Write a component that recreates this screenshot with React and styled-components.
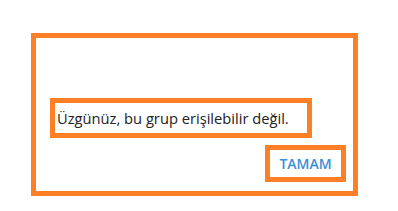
import React from "react";
import styled, { createGlobalStyle } from "styled-components";

const Global = createGlobalStyle`
  html, body { margin: 0; padding: 0; background: #ffffff; }
  body { font-family: "Open Sans", "Liberation Sans", sans-serif; }
`;

const Page = styled.div`
  width: 398px;
  height: 211px;
  padding: 33px 0 0 31px;
  box-sizing: border-box;
`;

const Dialog = styled.div`
  width: 327px;
  height: 163px;
  box-sizing: border-box;
  border: 5px solid #ff7f27;
  background: #fff;
  display: flex;
  flex-direction: column;
  justify-content: flex-end;
  gap: 7px;
  padding: 0 7px 9px 14px;
`;

const Message = styled.div`
  width: 262px;
  height: 40px;
  box-sizing: border-box;
  border: 5px solid #ff7f27;
  display: flex;
  align-items: center;
  padding-left: 2px;
  font-size: 14.7px;
  color: #222222;
  white-space: nowrap;
`;

const Button = styled.button`
  align-self: flex-end;
  width: 81px;
  height: 37px;
  box-sizing: border-box;
  border: 5px solid #ff7f27;
  background: #fff;
  padding: 0;
  font-family: "Open Sans", "Liberation Sans", sans-serif;
  font-size: 14px;
  font-weight: 600;
  color: #3a8fd6;
  cursor: pointer;
`;

export default function App() {
  return (
    <>
      <Global />
      <Page>
        <Dialog>
          <Message>Üzgünüz, bu grup erişilebilir değil.</Message>
          <Button>TAMAM</Button>
        </Dialog>
      </Page>
    </>
  );
}
